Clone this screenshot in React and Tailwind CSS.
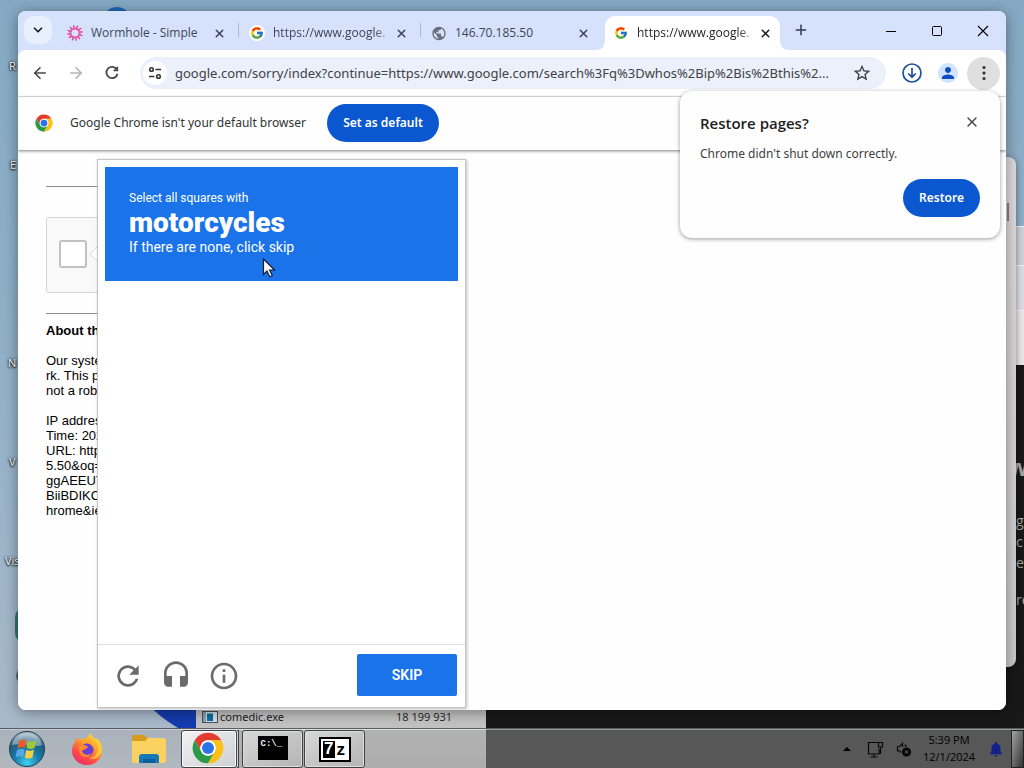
import React from "react";
import { FcGoogle } from "react-icons/fc";
import { MdHeadset, MdInfoOutline, MdPerson, MdPublic, MdNotifications, MdStarBorder } from "react-icons/md";
import { ArrowLeft, ArrowRight, ChevronDown, X, Plus } from "lucide-react";

const ui = "font-['Open_Sans','Noto_Sans',sans-serif]";

function ChromeLogo({ className }) {
  return (
    <svg viewBox="0 0 48 48" className={className} aria-hidden="true">
      <path d="M24 1A23 23 0 0 1 43.92 12.5L24 12.5A11.5 11.5 0 0 0 14.04 29.75L4.08 12.5A23 23 0 0 1 24 1Z" fill="#e33b2e" />
      <path d="M43.92 12.5A23 23 0 0 1 24 47L33.96 29.75A11.5 11.5 0 0 0 24 12.5Z" fill="#fbc116" />
      <path d="M24 47A23 23 0 0 1 4.08 12.5L14.04 29.75A11.5 11.5 0 0 0 33.96 29.75Z" fill="#2a9a48" />
      <circle cx="24" cy="24" r="11.5" fill="#fff" />
      <circle cx="24" cy="24" r="9" fill="#2b73e8" />
    </svg>
  );
}

function WormholeIcon() {
  return (
    <svg viewBox="0 0 18 18" className="size-[18px]" fill="none" strokeLinecap="round" aria-hidden="true">
      {Array.from({ length: 12 }, (_, i) => (
        <path
          key={i}
          d="M8.500 4.500C10.500 4 11.600 2.800 12 1.300"
          stroke={i % 3 === 0 ? "#c63f9e" : "#ee3f8d"}
          strokeWidth="1.500"
          transform={`rotate(${i * 30} 9 9)`}
        />
      ))}
      <circle cx="9" cy="9" r="5.500" stroke="#ea5aa3" strokeWidth="1.300" />
    </svg>
  );
}

function FirefoxIcon() {
  return (
    <svg viewBox="0 0 32 32" className="size-8" aria-hidden="true">
      <defs>
        <linearGradient id="fox" x1="0.8" y1="0" x2="0.2" y2="1">
          <stop offset="0" stopColor="#ffe23a" />
          <stop offset="0.4" stopColor="#ff9a2a" />
          <stop offset="0.7" stopColor="#ff4b45" />
          <stop offset="1" stopColor="#e62a70" />
        </linearGradient>
      </defs>
      <path d="M4 9C4.500 6.500 5.500 5 6.500 4C6.800 6 7.500 7 8.500 7.500C10 5.500 13 5 15 5.500C16.500 4.500 18 2.500 19.500 0C20.500 3 22 4.500 24 6C25 7 26 6.500 26.500 5.500C29.500 9 31 12.500 31 17A15 14.500 0 1 1 4 9Z" fill="url(#fox)" />
      <path d="M19 1C21 6 27 8 27 15C27 21 23 25 18 25C23 28 30 24 31 17C31 11 27 6 22 5Z" fill="#ffd43a" opacity="0.75" />
      <circle cx="16" cy="17" r="6.500" fill="#6b3fd6" />
      <path d="M9 13C12 11 15 12 17 14C15 17 12 16 11 18C12 22 17 23 20 20C18 26 10 25 8.500 19C8 17 8 15 9 13Z" fill="#ff8b2b" />
    </svg>
  );
}

function StartOrb() {
  return (
    <svg viewBox="0 0 38 38" className="size-[38px]" aria-hidden="true">
      <defs>
        <radialGradient id="orb" cx="0.5" cy="0.9" r="0.85">
          <stop offset="0" stopColor="#3fd0f0" />
          <stop offset="0.45" stopColor="#1379a8" />
          <stop offset="0.8" stopColor="#255b78" />
          <stop offset="1" stopColor="#a5bcc8" />
        </radialGradient>
      </defs>
      <circle cx="19" cy="19" r="17.500" fill="url(#orb)" stroke="#243c4c" />
      <path d="M4 15A15.500 15.500 0 0 1 34 15C26 18 12 12 4 15Z" fill="#e6eff4" opacity="0.45" />
      <path d="M11 11C14 9 16.500 9.500 18.500 10.500L17 18C15 17 12.500 17 9.500 18.500Z" fill="#ea5a2b" />
      <path d="M20 11C22.500 12 25 12 28.500 10.500L26.500 18C24 19.500 21 19 18.500 18Z" fill="#9cc83c" />
      <path d="M9 20C12 18.500 14.500 18.500 16.700 19.500L15 27C13 26 10.500 26 7.500 27.500Z" fill="#58a8e8" />
      <path d="M18.200 20C21 21 23.500 21 26 19.500L24.500 27.500C22 29 19 28.500 16.700 27.500Z" fill="#f8cf42" />
    </svg>
  );
}

function FolderIcon() {
  return (
    <svg viewBox="0 0 36 32" className="h-8 w-9" aria-hidden="true">
      <path d="M1 4Q1 2 3 2H13L16 5H33V12H1Z" fill="#d89a1d" />
      <path d="M1 8H14L17 5H33Q35 5 35 7V28Q35 30 33 30H3Q1 30 1 28Z" fill="#fbd160" />
      <path d="M8 24Q8 21 11 21H25Q28 21 28 24V30H8Z" fill="#1677b9" />
      <path d="M12 26H24V30H12Z" fill="#0b5f9e" />
    </svg>
  );
}

function Tab({ icon, title, active, divider, fade }) {
  return (
    <div className="relative flex h-full min-w-0 max-w-[182px] flex-1 items-end">
      <div className={`relative flex h-[34px] w-full items-center pl-2 ${active ? "ml-[2px] mr-[5px] rounded-t-[10px] bg-white pr-[7px]" : "ml-[2px] pr-3"}`}>
        {active && (
          <>
            <svg viewBox="0 0 10 10" className="absolute -left-[10px] bottom-0 size-[10px]" aria-hidden="true"><path d="M10 0V10H0Q10 10 10 0Z" fill="#fff" /></svg>
            <svg viewBox="0 0 10 10" className="absolute -right-[10px] bottom-0 size-[10px]" aria-hidden="true"><path d="M0 0V10H10Q0 10 0 0Z" fill="#fff" /></svg>
          </>
        )}
        <span className="flex size-4 shrink-0 items-center justify-center">{icon}</span>
        <span className={`ml-2 shrink-0 whitespace-nowrap text-[12px] leading-4 ${fade ? "mask-r-from-90% mask-r-to-110%" : ""} ${active ? "text-[#1f1f1f]" : "text-[#3d4757]"}`}>{title}</span>
        <button aria-label="Close tab" className="ml-auto flex size-4 shrink-0 items-center justify-center"><X className="size-[13px]" strokeWidth={2.8} color={active ? "#1f1f1f" : "#3c4656"} /></button>
      </div>
      {divider && <span className="absolute right-0 top-3 h-[14px] w-px bg-[#a9b8d6]" />}
    </div>
  );
}

function TabStrip() {
  return (
    <div className="flex h-[39px] shrink-0 bg-[#d6e2fb]">
      <button aria-label="Search tabs" className="ml-[6px] mt-[5px] flex size-7 shrink-0 items-center justify-center rounded-[10px] bg-[#e9f0fd]">
        <ChevronDown className="size-[14px]" strokeWidth={3} color="#1f1f1f" />
      </button>
      <div className="ml-[5px] flex min-w-0 flex-1">
        <Tab icon={<WormholeIcon />} title="Wormhole - Simple" divider />
        <Tab icon={<span className="flex size-4 shrink-0 items-center justify-center rounded-full bg-white"><FcGoogle className="size-[14px]" /></span>} title="https://www.google." divider fade />
        <Tab icon={<MdPublic className="size-[17px]" color="#68707f" />} title="146.70.185.50" />
        <Tab icon={<FcGoogle className="size-[14px]" />} title="https://www.google." active fade />
        <button aria-label="New tab" className="ml-[2px] mt-[5px] flex size-7 shrink-0 items-center justify-center"><Plus className="size-4" strokeWidth={2.2} color="#2f3848" /></button>
      </div>
      <button aria-label="Minimize" className="flex w-[46px] shrink-0 items-center justify-center"><svg viewBox="0 0 10 10" className="size-[10px]"><path d="M0 5.500H10" stroke="#000" /></svg></button>
      <button aria-label="Maximize" className="flex w-[46px] shrink-0 items-center justify-center"><svg viewBox="0 0 10 10" className="size-[10px]"><rect x="0.500" y="0.500" width="9" height="9" rx="1" fill="none" stroke="#000" /></svg></button>
      <button aria-label="Close" className="flex w-[46px] shrink-0 items-center justify-center"><svg viewBox="0 0 12 12" className="size-3"><path d="M1 1L11 11M11 1L1 11" stroke="#000" strokeWidth="1.100" /></svg></button>
    </div>
  );
}

function Toolbar() {
  return (
    <div className="shrink-0 bg-[#d6e2fb]">
      <div className="flex h-[47px] items-center rounded-t-lg border-b border-[#dfe2e8] bg-white pl-1 pr-[6px]">
        <button aria-label="Back" className="flex size-9 shrink-0 items-center justify-center"><ArrowLeft className="size-[18px]" strokeWidth={2.2} color="#474747" /></button>
        <button aria-label="Forward" className="flex size-9 shrink-0 items-center justify-center"><ArrowRight className="size-[18px]" strokeWidth={2.2} color="#b4b4b4" /></button>
        <button aria-label="Reload" className="flex size-9 shrink-0 items-center justify-center">
          <svg viewBox="0 0 24 24" className="size-[18px]" fill="none" stroke="#474747" strokeWidth="2.400"><path d="M18.500 7.500A7.500 7.500 0 1 0 19.400 13M19 3.500V8.500H14" /></svg>
        </button>
        <div className="ml-[10px] flex h-8 min-w-0 flex-1 items-center rounded-full bg-[#ecf0fa] pl-[3px] pr-[14px]">
          <button aria-label="View site information" className="flex size-6 shrink-0 items-center justify-center rounded-full bg-white">
            <svg viewBox="0 0 14 14" className="size-[14px]" fill="none" stroke="#333" strokeWidth="1.600"><circle cx="3.500" cy="3.500" r="1.800" /><path d="M7.500 3.500H13M1 10.500H6.500" /><circle cx="10.500" cy="10.500" r="1.800" /></svg>
          </button>
          <input aria-label="Address" readOnly value="google.com/sorry/index?continue=https://www.google.com/search%3Fq%3Dwhos%2Bip%2Bis%2Bthis%2..." className="ml-2 min-w-0 flex-1 bg-transparent font-['Noto_Sans',sans-serif] text-[13px] leading-5 text-[#3f4246] outline-none" />
          <button aria-label="Bookmark this tab" className="ml-3 shrink-0"><MdStarBorder className="size-5" color="#3c3f43" /></button>
        </div>
        <button aria-label="Downloads" className="ml-2 flex size-9 shrink-0 items-center justify-center">
          <svg viewBox="0 0 20 20" className="size-5" fill="none" stroke="#1d4f9f" strokeWidth="1.700"><circle cx="10" cy="10" r="9" /><path d="M10 5V14M6.200 10.500L10 14.200L13.800 10.500" /></svg>
        </button>
        <button aria-label="Profile" className="flex size-9 shrink-0 items-center justify-center"><span className="flex size-5 items-center justify-center rounded-full bg-[#d0e4ff]"><MdPerson className="size-[18px]" color="#0b4fc4" /></span></button>
        <button aria-label="Chrome menu" className="ml-px flex size-[33px] shrink-0 items-center justify-center rounded-full bg-[#dfdfdf]">
          <svg viewBox="0 0 4 16" className="h-4 w-1" fill="#333"><circle cx="2" cy="2.500" r="1.600" /><circle cx="2" cy="8" r="1.600" /><circle cx="2" cy="13.500" r="1.600" /></svg>
        </button>
      </div>
    </div>
  );
}

function Challenge() {
  return (
    <section aria-label="Challenge" className="absolute bottom-[2px] left-[79px] top-[9px] flex w-[369px] flex-col border border-[#c4c4c4] bg-white font-['Roboto',sans-serif] shadow-[1px_1px_3px_rgba(0,0,0,0.25)]">
      <div className="m-[7px] flex h-[114px] flex-col bg-[#1a73e8] pl-6 pt-[23px] text-white">
        <span className="text-[12px] leading-4">Select all squares with</span>
        <strong className="text-[28px] font-black leading-[33px]">motorcycles</strong>
        <span className="text-[14px] leading-4">If there are none, click skip</span>
      </div>
      <div className="mt-auto flex h-[63px] items-center border-t border-[#dfdfdf] pl-[14px] pr-2">
        <button aria-label="Get a new challenge" className="flex w-12 shrink-0 items-center"><svg viewBox="0 0 24 24" className="size-8" fill="#6b6b6b"><path d="M17.650 6.350A8 8 0 1 0 19.730 14H17.650A6 6 0 1 1 12 6C13.660 6 15.140 6.690 16.220 7.780L13 11H20V4Z" /></svg></button>
        <button aria-label="Get an audio challenge" className="flex w-12 shrink-0 items-center"><MdHeadset className="size-8" color="#6b6b6b" /></button>
        <button aria-label="Help" className="flex w-12 shrink-0 items-center"><MdInfoOutline className="size-8" color="#6b6b6b" /></button>
        <button className="mb-[3px] ml-auto h-[42px] w-[100px] rounded-[2px] bg-[#1a73e8] text-[14px] font-semibold leading-5 text-white">SKIP</button>
      </div>
    </section>
  );
}

function SorryPage() {
  return (
    <main className="relative min-h-0 flex-1 overflow-hidden bg-[#fefefe]">
      <div className="ml-7 w-[51px] overflow-hidden whitespace-nowrap pt-9 font-['Liberation_Sans',sans-serif] text-[13px] leading-[15px] text-black">
        <hr className="border-[#8d8d8d]" />
        <div className="mt-[30px] flex h-[76px] w-[300px] items-center rounded-[3px] border border-[#d3d3d3] bg-[#f9f9f9] pb-[2px] pl-3">
          <input type="checkbox" aria-label="I'm not a robot" className="size-7 appearance-none rounded-[3px] border-2 border-[#c1c1c1] bg-white" />
          <svg viewBox="0 0 10 20" className="ml-[2px] h-5 w-[10px]" aria-hidden="true"><path d="M10 1L1 10L10 19" fill="#fff" stroke="#ddd" /></svg>
        </div>
        <hr className="mt-5 border-[#8d8d8d]" />
        <p className="mt-[9px] font-bold">About th</p>
        <p className="mt-[15px]">Our syste<br />rk. This p<br />not a rob</p>
        <p className="mt-[15px]">IP addres<br />Time: 202<br />URL: http<br />5.50&amp;oq=<br />ggAEEUY<br />BiiBDIKC<br />hrome&amp;ie</p>
      </div>
      <Challenge />
    </main>
  );
}

function Browser() {
  return (
    <section aria-label="Google Chrome" className="absolute bottom-[18px] left-[18px] right-[18px] top-[11px] rounded-lg shadow-[0_2px_14px_rgba(0,0,0,0.4)]">
      <div className="flex h-full flex-col overflow-hidden rounded-lg bg-white">
        <TabStrip />
        <Toolbar />
        <div className="z-10 flex h-[53px] shrink-0 items-center bg-[#fefefe] pb-px pl-[17px] shadow-[0_1px_3px_rgba(0,0,0,0.5)]">
          <ChromeLogo className="size-[18px]" />
          <span className="ml-[17px] w-[241px] whitespace-nowrap font-['Noto_Sans',sans-serif] text-[12px] leading-5 text-[#303236]">Google Chrome isn't your default browser</span>
          <button className="ml-4 h-[38px] w-28 rounded-full bg-[#0b57d0] font-['Noto_Sans',sans-serif] text-[12px] font-semibold leading-5 text-white">Set as default</button>
        </div>
        <SorryPage />
      </div>
      <div role="dialog" aria-label="Restore pages?" className="absolute right-[6px] top-20 z-20 flex w-80 flex-col rounded-xl bg-[#fefefe] px-5 pb-[21px] pt-[21px] shadow-[0_1px_4px_rgba(0,0,0,0.4)]">
        <div className="flex items-center justify-between">
          <h2 className="text-[15px] font-semibold leading-[22px] text-[#1f1f1f]">Restore pages?</h2>
          <button aria-label="Close" className="mb-[3px] flex size-4 items-center justify-center"><X className="size-4" strokeWidth={2} color="#444" /></button>
        </div>
        <p className="mt-[10px] font-['Noto_Sans',sans-serif] text-[12px] leading-5 text-[#3c4043]">Chrome didn't shut down correctly.</p>
        <button className="mt-[15px] h-[38px] w-[77px] self-end rounded-full bg-[#0b57d0] font-['Noto_Sans',sans-serif] text-[12px] font-semibold leading-5 text-white">Restore</button>
      </div>
      <svg viewBox="0 0 14 20" className="absolute left-[244px] top-[247px] z-10 h-5 w-[14px]" aria-hidden="true"><path d="M1.500 1V16.500L5 13L7.700 18.700L10.300 17.500L7.600 12H12.500Z" fill="#fff" stroke="#141c30" strokeWidth="1.200" /></svg>
    </section>
  );
}

function Desktop() {
  return (
    <div className="relative min-h-0 flex-1 overflow-hidden bg-linear-to-b from-[#85a9c3] via-[#91b0c8] to-[#a9b9ca]">
      <div className="absolute left-[103px] top-[7px] size-7 rounded-full bg-[#1d68b4]" />
      <svg viewBox="0 0 50 24" className="absolute bottom-0 left-[148px] h-6 w-[50px]" aria-hidden="true"><path d="M0 0H50V24H30Q10 12 0 0Z" fill="#153cae" /></svg>
      <div className="text-[11px] leading-4 text-white text-shadow-[0_0_3px_#000,0_1px_2px_#000]">
        <span className="absolute left-[9px] top-[58px]">R</span>
        <span className="absolute left-[10px] top-[157px]">E</span>
        <span className="absolute left-[8px] top-[355px]">N</span>
        <span className="absolute left-[9px] top-[454px]">V</span>
        <span className="absolute left-[5px] top-[553px]">Vis</span>
      </div>
      <div className="absolute left-[15px] top-[607px] h-9 w-5 rounded-full bg-[#32766c]" />
      <div className="absolute left-4 top-[668px] size-4 rounded-full bg-[#59646b]" />
      <div className="absolute bottom-0 left-[486px] right-0 top-[226px] flex flex-col items-end overflow-hidden bg-[#181818] text-[#a5a5a5]">
        <div className="h-[39px] w-full shrink-0 border-t border-[#eef1f5] bg-[#cccfd8]" />
        <div className="h-[46px] w-full shrink-0 border-y border-[#f2f2f4] bg-[#dadae2]" />
        <div className="h-[54px] w-full shrink-0 bg-[#e4e4e4]" />
        <div className="mt-[86px] w-2 text-[24px] font-bold leading-8"><span className="-ml-2">w</span></div>
        <div className="mt-[27px] w-2 text-[14px] leading-[21px]">g<br />c<br />e</div>
        <div className="mt-4 w-2 text-[14px] leading-[21px]">re</div>
      </div>
      <div className="absolute bottom-0 left-[196px] top-[300px] flex w-[290px] items-end bg-[#c2c2c2]">
        <div className="flex h-[23px] w-full items-center pl-[6px] pr-[34px] text-[12px] leading-4 text-[#1c1c1c]">
          <svg viewBox="0 0 16 12" className="h-3 w-4" aria-hidden="true"><rect x="0.500" y="0.500" width="15" height="11" fill="#d5e0e6" stroke="#45515b" /><path d="M1 1H4V11H1Z" fill="#8ba1ad" /><rect x="5" y="2.500" width="6" height="7.500" fill="#0d6c9e" /></svg>
          <span className="ml-[2px] flex-1 font-['Noto_Sans',sans-serif] text-[11px]">comedic.exe</span>
          <span className="text-[11px]">18 199 931</span>
        </div>
      </div>
      <div className="absolute right-2 top-[157px] h-[510px] w-[600px] rounded-lg bg-linear-to-b from-[#e0dadd] to-[#c9c9c9] shadow-[0_1px_6px_rgba(0,0,0,0.4)]" />
      <Browser />
      <div className="absolute right-[15px] top-[203px] h-[18px] w-[2px] bg-[#776a70]" />
    </div>
  );
}

function TaskButton({ label, className, children }) {
  return <button aria-label={label} className={`flex h-full shrink-0 items-center justify-center rounded-[3px] border border-[#3f4145] ${className}`}>{children}</button>;
}

function Taskbar() {
  return (
    <footer className="flex h-10 shrink-0 items-stretch border-t border-[#585e64] bg-[#575757]">
      <div className="flex w-[181px] shrink-0 items-center border-t border-[#c4ccd3] bg-linear-to-b from-[#a9b2bb] to-[#b2b8be]">
        <button aria-label="Start" className="ml-2 flex shrink-0"><StartOrb /></button>
        <button aria-label="Firefox" className="ml-[25px] flex shrink-0"><FirefoxIcon /></button>
        <button aria-label="File Explorer" className="ml-7 flex shrink-0"><FolderIcon /></button>
      </div>
      <div className="flex w-[305px] shrink-0 border-t border-[#dedede] bg-linear-to-b from-[#b2b2b2] to-[#adadad]">
        <TaskButton label="Google Chrome" className="w-14 bg-linear-to-br from-[#f2f2f3] to-[#cfd0d2] pb-[2px] pr-[3px] shadow-[inset_0_0_0_1px_#fafafa]"><ChromeLogo className="size-8" /></TaskButton>
        <span className="w-[2px] border-y border-r border-[#3f4145] bg-[#d9d9d9]" />
        <TaskButton label="Command Prompt" className="ml-[3px] w-[61px] bg-linear-to-br from-[#d8d8d8] to-[#b4b4b4] pb-[2px] shadow-[inset_0_0_0_1px_#dedede]">
          <span className="flex h-6 w-[30px] items-start bg-black pl-[3px] pt-[3px] font-['Liberation_Mono',monospace] text-[9px] font-bold leading-[10px] text-[#f0f0f0]">C:\_</span>
        </TaskButton>
        <TaskButton label="7-Zip" className="ml-px w-[61px] bg-linear-to-br from-[#d8d8d8] to-[#b4b4b4] shadow-[inset_0_0_0_1px_#dedede]">
          <span className="flex h-[25px] w-8 items-center justify-center border-2 border-black bg-white p-[2px]">
            <span className="flex h-full w-[13px] items-center justify-center bg-black font-['Liberation_Sans',sans-serif] text-[17px] font-bold leading-4 text-white">7</span>
            <span className="flex h-full w-[12px] items-end justify-center font-['Liberation_Sans',sans-serif] text-[17px] font-bold leading-4 text-black">z</span>
          </span>
        </TaskButton>
      </div>
      <div className="flex min-w-0 flex-1 items-center justify-end border-t border-[#999]">
        <button aria-label="Show hidden icons" className="mr-4"><svg viewBox="0 0 8 4" className="h-1 w-2"><path d="M0 4L4 0L8 4Z" fill="#000" /></svg></button>
        <svg viewBox="0 0 17 17" className="mr-3 size-[17px] shrink-0" fill="none" stroke="#080808" strokeWidth="1.200" aria-label="Network"><path d="M11 1.500H1.500V13H12V8M3.500 16H10.500M7 13V16M11.500 1.500H15.500V6H11.500ZM13.500 6V13" /></svg>
        <svg viewBox="0 0 16 16" className="mr-[11px] size-4 shrink-0" fill="none" stroke="#080808" strokeWidth="1.200" aria-label="Volume"><path d="M1.500 5.500V10H3.500L5 11.500M1.500 5.500H3.500L6.500 2.500V6M9 3.500Q10 4.500 10 6" /><circle cx="10.500" cy="11" r="4" fill="#080808" /><path d="M9 9.500L12 12.500M12 9.500L9 12.500" stroke="#777" strokeWidth="1" /></svg>
        <time className="w-[52px] shrink-0 whitespace-nowrap pb-[2px] text-center text-[11px] leading-[17px] text-black">5:39 PM<br />12/1/2024</time>
        <MdNotifications className="ml-3 size-[18px] shrink-0" color="#14208a" />
        <button aria-label="Show desktop" className="ml-[6px] h-full w-[13px] shrink-0 border border-[#222] bg-linear-to-br from-[#a5a5a5] to-[#333]" />
      </div>
    </footer>
  );
}

export default function App() {
  return (
    <div className={`flex h-screen flex-col overflow-hidden ${ui}`}>
      <Desktop />
      <Taskbar />
    </div>
  );
}
